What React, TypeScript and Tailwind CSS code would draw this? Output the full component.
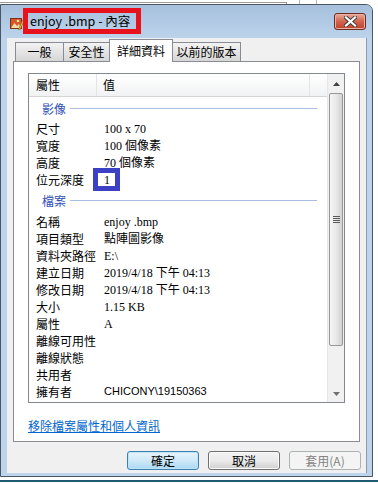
import React from "react";

const cjk = "font-['Segoe_UI','Noto_Sans_CJK_TC',sans-serif]";
const serif = "font-['Liberation_Serif','Noto_Sans_CJK_TC',serif]";

type Row = { label: string; value?: string; sans?: boolean; mark?: boolean };

const imageRows: Row[] = [
  { label: "尺寸", value: "100 x 70" },
  { label: "寬度", value: "100 個像素" },
  { label: "高度", value: "70 個像素" },
  { label: "位元深度", value: "1", mark: true },
];

const fileRows: Row[] = [
  { label: "名稱", value: "enjoy .bmp" },
  { label: "項目類型", value: "點陣圖影像" },
  { label: "資料夾路徑", value: "E:\\" },
  { label: "建立日期", value: "2019/4/18 下午 04:13" },
  { label: "修改日期", value: "2019/4/18 下午 04:13" },
  { label: "大小", value: "1.15 KB" },
  { label: "屬性", value: "A" },
  { label: "離線可用性" },
  { label: "離線狀態" },
  { label: "共用者" },
  { label: "擁有者", value: "CHICONY\\19150363", sans: true },
];

function GroupHeader({ title, h }: { title: string; h: string }) {
  return (
    <div className={`flex items-center ${h} pl-[13px] pr-[10px]`}>
      <span className={`text-[12px] text-[#2f4fb8] ${cjk} leading-none`}>{title}</span>
      <div className="flex-1 h-px bg-[#a9bde3] ml-[4px]" />
    </div>
  );
}

function PropRow({ row }: { row: Row }) {
  return (
    <div className="flex h-[17px] items-center text-[12px] text-black leading-none">
      <div className={`w-[75px] pl-[7px] ${cjk}`}>{row.label}</div>
      <div
        className={`relative ${
          row.sans ? "text-[11px] font-['Liberation_Sans','Noto_Sans_CJK_TC',sans-serif]" : serif
        }`}
      >
        {row.value}
        {row.mark && (
          <div className="absolute left-[-11px] top-[-6px] w-[27px] h-[23px] border-[5px] border-[#3b40c4]" />
        )}
      </div>
    </div>
  );
}

function Tab({ label, w, active }: { label: string; w: string; active?: boolean }) {
  return active ? (
    <div
      className={`${w} h-[23px] -mb-px relative z-10 bg-white border border-b-0 border-[#898c95] flex items-center justify-center text-[12px] ${cjk} text-black`}
    >
      {label}
    </div>
  ) : (
    <div
      className={`${w} h-[19px] -ml-px first:ml-0 bg-gradient-to-b from-[#f3f3f3] to-[#d6d6d6] border border-b-0 border-[#898c95] flex items-center justify-center text-[12px] ${cjk} text-black`}
    >
      {label}
    </div>
  );
}

function Button({ label, kind }: { label: string; kind: "default" | "normal" | "disabled" }) {
  const cls =
    kind === "default"
      ? "border-[#3c7fb1] bg-gradient-to-b from-[#e6f4fc] via-[#cfe9f8] to-[#a8d8f3] text-black shadow-[inset_0_0_0_1px_#bfe4f7]"
      : kind === "normal"
      ? "border-[#707070] bg-gradient-to-b from-[#f2f2f2] via-[#ebebeb] to-[#cfcfcf] text-black shadow-[inset_0_0_0_1px_#fbfbfb]"
      : "border-[#adb2b5] bg-[#f4f4f4] text-[#838383]";
  return (
    <div
      className={`w-[72px] h-[19px] rounded-[3px] border ${cls} flex items-center justify-center text-[12px] ${cjk} leading-none`}
    >
      {label}
    </div>
  );
}

function Scrollbar() {
  return (
    <div className="w-[17px] flex flex-col bg-[#f1f1f1] border-l border-[#e6e6e6]">
      <div className="h-[19px] flex items-center justify-center">
        <svg width="7" height="4" viewBox="0 0 7 4">
          <path d="M0 4 L3.5 0 L7 4Z" fill="#404040" />
        </svg>
      </div>
      <div className="h-[253px] mx-px rounded-[2px] border border-[#979797] bg-gradient-to-r from-[#f5f5f5] via-[#e8e8e8] to-[#d3d3d3] flex items-center justify-center">
        <svg width="7" height="8" viewBox="0 0 7 8">
          <path d="M0 0.5H7M0 2.5H7M0 4.5H7M0 6.5H7" stroke="#5a5a5a" strokeWidth="1" />
        </svg>
      </div>
      <div className="flex-1" />
      <div className="h-[17px] flex items-center justify-center">
        <svg width="7" height="4" viewBox="0 0 7 4">
          <path d="M0 0 L3.5 4 L7 0Z" fill="#707070" />
        </svg>
      </div>
    </div>
  );
}

export default function App() {
  return (
    <div className="w-[378px] h-[483px] bg-white overflow-hidden flex flex-col">
      {/* window behind */}
      <div className="h-[4px] flex">
        <div className="w-[287px] mt-[2px] border-t border-r border-[#9a9a9a]" />
        <div className="w-[13px] border-r border-[#b5b5b5]" />
        <div className="w-[17px] border-r border-[#b5b5b5]" />
      </div>

      <div className="w-[373px] h-[473px] rounded-tr-[7px] border border-[#4b5663] bg-[#bed4ec] flex flex-col">
        {/* title bar */}
        <div className="h-[33px] bg-gradient-to-b from-[#a6c0dd] to-[#bcd3eb] rounded-tr-[6px] flex items-start pl-[9px] pr-[6px]">
          <svg width="14" height="14" viewBox="0 0 14 14" className="mt-[11px]">
            <rect x="0.5" y="2.5" width="11" height="10" fill="#d8572a" stroke="#7a3416" />
            <path d="M1 12 L4.5 7 L7 10 L9 8 L11 12Z" fill="#f3d9a4" />
            <circle cx="8" cy="5" r="1.3" fill="#fbe9a0" />
            <path d="M8.5 13.5 L12.5 4 L14 4.8 L10 14Z" fill="#e9c443" stroke="#7b5d12" strokeWidth="0.6" />
          </svg>
          <div className="ml-[-1px] mt-[3px] h-[26px] w-[118px] border-[5px] border-[#e8121c] flex items-center pl-[2px]">
            <span className={`text-[12.5px] text-black leading-none ${cjk}`}>enjoy .bmp - 內容</span>
          </div>
          <div className="flex-1" />
          <div className="mt-[8px] w-[32px] h-[17px] rounded-[3px] border border-[#6b2c22] bg-gradient-to-b from-[#e9a99a] via-[#d2634e] to-[#c0402a] flex items-center justify-center shadow-[inset_0_0_0_1px_#eab2a5]">
            <svg width="13" height="11" viewBox="0 0 13 11">
              <path d="M2 1.5 L11 9.5 M11 1.5 L2 9.5" stroke="#3d3d3d" strokeWidth="4" strokeLinecap="square" />
              <path d="M2 1.5 L11 9.5 M11 1.5 L2 9.5" stroke="#ffffff" strokeWidth="2.2" strokeLinecap="square" />
            </svg>
          </div>
        </div>

        {/* client area */}
        <div className="ml-[6px] mr-[5px] h-[435px] bg-[#f0f0f0] border-r border-[#8e9aa8] flex flex-col">
          <div className="h-[22px] flex items-end pl-[8px] mt-px">
            <Tab label="一般" w="w-[49px]" />
            <Tab label="安全性" w="w-[47px]" />
            <Tab label="詳細資料" w="w-[64px] -ml-px" active />
            <Tab label="以前的版本" w="w-[69px] -ml-px" />
          </div>

          <div className="mx-[6px] h-[381px] bg-white border border-[#898c95] flex flex-col px-[14px] pt-[11px]">
            {/* list view */}
            <div className="h-[330px] border border-[#828790] flex">
              <div className="flex-1 flex flex-col">
                <div className="h-[23px] flex bg-gradient-to-b from-white to-[#f1f2f4] border-b border-[#d5d5d5] text-[12px] text-black leading-none">
                  <div className={`w-[68px] pl-[7px] flex items-center border-r border-[#e3e4e8] ${cjk}`}>屬性</div>
                  <div className={`w-[213px] pl-[6px] flex items-center border-r border-[#e3e4e8] ${cjk}`}>值</div>
                  <div className="flex-1" />
                </div>
                <GroupHeader title="影像" h="h-[23px]" />
                {imageRows.map((r) => (
                  <PropRow key={r.label} row={r} />
                ))}
                <GroupHeader title="檔案" h="h-[25px]" />
                {fileRows.map((r) => (
                  <PropRow key={r.label} row={r} />
                ))}
              </div>
              <Scrollbar />
            </div>

            <div className="mt-[10px]">
              <span className={`text-[12px] text-[#0066cc] underline leading-none ${cjk}`}>移除檔案屬性和個人資訊</span>
            </div>
          </div>

          <div className="mt-[9px] flex justify-end gap-[9px] pr-[5px]">
            <Button label="確定" kind="default" />
            <Button label="取消" kind="normal" />
            <Button label="套用(A)" kind="disabled" />
          </div>
        </div>
      </div>

      <div className="mt-[3px] h-[2px] bg-[#1e5a72]" />
    </div>
  );
}
